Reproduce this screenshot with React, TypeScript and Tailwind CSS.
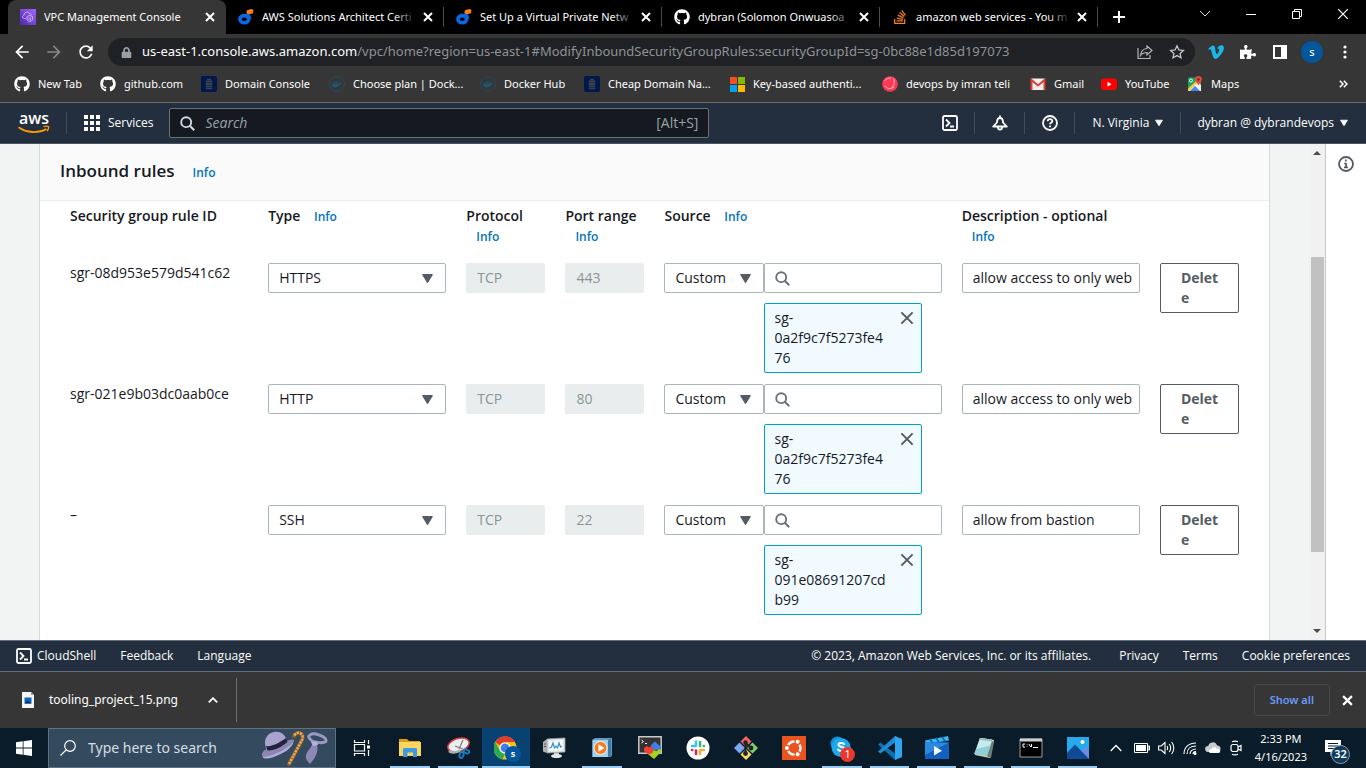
import type { ReactNode } from "react";
import { FaGithub, FaVimeoV, FaDocker, FaPuzzlePiece, FaLock, FaStackOverflow } from "react-icons/fa";
import { MdArrowBack, MdArrowForward, MdRefresh } from "react-icons/md";

/* ---------- small drawings ---------- */

const Cross = ({ s = 10, w = 2 }: { s?: number; w?: number }) => (
  <svg width={s} height={s} viewBox="0 0 10 10" stroke="currentColor" strokeWidth={w} fill="none" aria-hidden="true">
    <path d="M1 1l8 8M9 1l-8 8" />
  </svg>
);

const Caret = ({ s = 10 }: { s?: number }) => (
  <svg width={s} height={s} viewBox="0 0 10 10" fill="currentColor" stroke="currentColor" strokeWidth="1" strokeLinejoin="round" aria-hidden="true">
    <path d="M.7 1.5h8.6L5 8.5z" />
  </svg>
);

const Lens = ({ s = 16, w = 2 }: { s?: number; w?: number }) => (
  <svg width={s} height={s} viewBox="0 0 16 16" fill="none" stroke="currentColor" strokeWidth={w} aria-hidden="true">
    <circle cx="6.6" cy="6.6" r="5.3" />
    <path d="M10.4 10.4l4.8 4.8" />
  </svg>
);

const VpcIcon = () => (
  <svg width="16" height="16" viewBox="0 0 16 16" fill="none" aria-hidden="true">
    <defs>
      <linearGradient id="vpc" x1="0" y1="1" x2="1" y2="0">
        <stop stopColor="#4d27aa" />
        <stop offset="1" stopColor="#a166ff" />
      </linearGradient>
    </defs>
    <path d="M0 0h16v16H0z" fill="url(#vpc)" />
    <path d="M5.800 9.500H4.600C3.400 9.500 2.600 8.800 2.600 7.900s.7-1.600 1.500-1.700C4.100 4.300 5.400 3 7 3c1.400 0 2.300.8 2.700 2 .8-.4 2 0 2.200.9" stroke="#d9c9ff" strokeWidth=".8" />
    <path d="M9.800 6.500l2.800 1v2.600c0 1.300-1.300 2.200-2.800 2.800-1.500-.6-2.800-1.500-2.800-2.800V7.500zM9 8.500v3M10.600 8.500v3" stroke="#d9c9ff" strokeWidth=".8" />
  </svg>
);

const OceanIcon = () => (
  <svg width="16" height="16" viewBox="0 0 16 16" aria-hidden="true">
    <ellipse cx="6.300" cy="10.200" rx="4.400" ry="3.600" fill="none" stroke="#0b68e0" strokeWidth="3.600" />
    <path d="M7.500 4.600l4.500.6 1.500 5-4-2z" fill="#0b68e0" />
    <path d="M9 1.200L13 0l2.500.8L15 4.200 12.500 5H9.500L8.300 3.800z" fill="#ff7a1a" />
  </svg>
);

const DomainIcon = () => (
  <svg width="16" height="16" viewBox="0 0 16 16" aria-hidden="true">
    <rect width="16" height="16" rx="2" fill="#02174b" />
    <path d="M6 2.800h4v1.400H6zM4.700 4.600h6.600v2H4.700zM4.700 7.100h6.600v1.800H4.700zM4.700 9.400h6.600v1.800H4.700zM4.700 11.700h6.600v1.500H4.700z" fill="#39424e" />
  </svg>
);

const DockerIcon = () => (
  <span className="flex size-4 items-center justify-center rounded-full border border-[#26485c] text-[#1f5573]">
    <FaDocker className="size-2.5" />
  </span>
);

const MicrosoftIcon = () => (
  <svg width="15" height="15" viewBox="0 0 15 15" aria-hidden="true">
    <path d="M0 0h7v7H0z" fill="#f25022" />
    <path d="M8 0h7v7H8z" fill="#7fba00" />
    <path d="M0 8h7v7H0z" fill="#00a4ef" />
    <path d="M8 8h7v7H8z" fill="#ffb900" />
  </svg>
);

const RedBall = () => (
  <svg width="16" height="16" viewBox="0 0 16 16" fill="none" aria-hidden="true">
    <circle cx="8" cy="8" r="7.800" fill="#fa3a55" />
    <path d="M3 9.500c1 3 5 4.500 9 1.500M11.500 2.500c1.500 3 1 6.500-2 9.500M2.500 5C4 3 6.500 2 9 2" stroke="#ffb9c3" strokeWidth="1" />
  </svg>
);

const GmailIcon = () => (
  <svg width="16" height="16" viewBox="0 0 16 16" aria-hidden="true">
    <rect x="1" y="2.500" width="14" height="11.500" rx="1" fill="#f1f1f1" />
    <path d="M1.500 14V4L8 9.500 14.500 4v10" fill="none" stroke="#d93f35" strokeWidth="2" />
    <path d="M2 14l5-4.500M14 14L9 9.500" stroke="#cfcfcf" strokeWidth=".6" />
  </svg>
);

const YouTubeIcon = () => (
  <svg width="16" height="16" viewBox="0 0 16 16" aria-hidden="true">
    <rect y="2.500" width="16" height="11.500" rx="3" fill="#f00" />
    <path d="M6.500 5.800v5l4-2.500z" fill="#fff" />
  </svg>
);

const MapsIcon = () => (
  <svg width="16" height="16" viewBox="0 0 16 16" aria-hidden="true">
    <rect x="1" y="1.500" width="13" height="13.500" rx="1" fill="#1ea362" />
    <path d="M1 14.500L10 5l4 4v6H1z" fill="#f3f3f3" />
    <path d="M3 15l5-5 5 5z" fill="#4285f4" />
    <path d="M1 12.500L9.500 4.500l1.500 1.500L2 15l-1-.5z" fill="#fbc834" />
    <circle cx="4" cy="4.500" r="1.500" fill="none" stroke="#fff" strokeWidth=".9" />
    <path d="M11.500 0a3.400 3.400 0 013.400 3.400c0 2.400-2.600 3.300-3.400 6.100-.8-2.800-3.400-3.700-3.400-6.100A3.400 3.400 0 0111.500 0z" fill="#dd4b3e" />
    <circle cx="11.500" cy="3.400" r="1.200" fill="#7e1f17" />
  </svg>
);

const ShellIcon = () => (
  <svg width="16" height="16" viewBox="0 0 16 16" fill="none" stroke="currentColor" strokeWidth="1.800" aria-hidden="true">
    <rect x="1" y="1" width="14" height="14" rx="1.500" />
    <path d="M4 4.500L7.500 8 4 11.500M8 11.500h4" />
  </svg>
);

const BellIcon = () => (
  <svg width="16" height="16" viewBox="0 0 16 16" fill="none" stroke="currentColor" strokeWidth="1.800" strokeLinejoin="round" aria-hidden="true">
    <path d="M8 .5v2.500M5 7.500C5 4.800 6.300 3 8 3s3 1.800 3 4.500l3.800 4H1.200zM5.800 12.200c.2 1.600 1 2.500 2.200 2.500s2-.9 2.200-2.500" />
  </svg>
);

const HelpIcon = () => (
  <svg width="16" height="16" viewBox="0 0 16 16" fill="none" stroke="currentColor" strokeWidth="1.800" aria-hidden="true">
    <circle cx="8" cy="8" r="7" />
    <path d="M5.700 6.300C5.700 5 6.700 4.200 8 4.200s2.300.8 2.300 2c0 1.500-2.300 1.600-2.300 3.100M8 10.500v1.700" />
  </svg>
);

const GridIcon = () => (
  <svg width="16" height="16" viewBox="0 0 16 16" fill="currentColor" aria-hidden="true">
    {[0, 6, 12].map((y) => [0, 6, 12].map((x) => <rect key={`${x}-${y}`} x={x} y={y} width="4" height="4" />))}
  </svg>
);

const InfoIcon = () => (
  <svg width="16" height="16" viewBox="0 0 16 16" fill="none" stroke="currentColor" strokeWidth="1.800" aria-hidden="true">
    <circle cx="8" cy="8" r="7" />
    <path d="M7.800 3.600v1.800M6.200 7.500H8v4M6 11.300h4" strokeWidth="1.700" />
  </svg>
);

const AccessoriesIcon = () => (
  <svg width="70" height="38" viewBox="0 0 70 38" fill="none" aria-hidden="true">
    <path d="M1 27c-.5-3 2-6 5-7l20-8c4-2 8-2 7 0-1 4-8 9-14 12-7 3-15 7-18 3z" fill="#8c86b4" />
    <path d="M5 19C2 11 6 4 13 3c6-1 11 2 13 9-5 4-13 9-20 9z" fill="#a9a3d0" />
    <path d="M5 17c7 1 14-4 20-8l1.500 4c-6 5-13 9-20 8.500z" fill="#25223f" />
    <path d="M1.500 28c6 0 22-5 31-15-2 6-8 10-15 13-6 3-14 5-16 2z" fill="#b3aedb" />
    <path d="M28 35L41 11c3-7-5-10-8-4" stroke="#8a5a26" strokeWidth="4" strokeLinecap="round" />
    <path d="M28 35L41 11c3-7-5-10-8-4" stroke="#e2a761" strokeWidth="2.600" strokeDasharray="2.500 .8" />
    <path d="M49 6c3-3 15 1 16 5s-12 3-15 0-3-4-1-5z" stroke="#9d98c2" strokeWidth="3" />
    <path d="M52 14l4 2c2 8-3 14-7 19-3-3-5-6-4-9 1-4 5-7 7-12z" fill="#8d88b6" />
    <path d="M50 13l6-1 1 4-5 1z" fill="#b4afd8" />
  </svg>
);

const Task = ({ children }: { children: ReactNode }) => (
  <svg width="24" height="24" viewBox="0 0 24 24" fill="none" aria-hidden="true">
    {children}
  </svg>
);

const TaskViewIcon = () => (
  <Task>
    <path d="M4.500 4v2.500h10V4M4.500 20v-2.500h10V20M4.500 8.500h10v6.500h-10zM18.500 4v4M18.500 14v6" stroke="#fff" strokeWidth="1.200" />
    <path d="M17 9.500h3v3h-3z" fill="#fff" />
  </Task>
);
const ExplorerIcon = () => (
  <Task>
    <path d="M1 3h8l2 2h11v14H1z" fill="#dd9d12" />
    <path d="M1 6h22v14H1z" fill="#fcd462" />
    <path d="M5 21v-7.500c0-1 .5-1.500 1.500-1.500h11c1 0 1.500.5 1.500 1.500V21h-4v-4.500H9.500V21z" fill="#3a9be0" />
  </Task>
);
const SnipIcon = () => (
  <Task>
    <ellipse cx="12.500" cy="9" rx="11" ry="6.500" transform="rotate(-18 12.500 9)" fill="#eceff1" stroke="#d33c3c" strokeWidth="1.500" />
    <path d="M3 15c2 2 7 2 11-.5" stroke="#a9b1b5" strokeWidth="2.500" />
    <path d="M17 4l-4 9M9 10l8 3" stroke="#777" strokeWidth="1.200" />
    <ellipse cx="15.500" cy="19" rx="2" ry="3" transform="rotate(20 15.500 19)" stroke="#1b7fc4" strokeWidth="1.800" />
    <ellipse cx="20.500" cy="15.500" rx="2.800" ry="1.800" transform="rotate(20 20.500 15.500)" stroke="#1b7fc4" strokeWidth="1.800" />
  </Task>
);
const ChromeIcon = () => (
  <Task>
    <circle cx="11" cy="12" r="11.500" fill="#fbc116" />
    <path d="M1.200 6A11.500 11.500 0 0121 6H11a5.800 5.800 0 00-5 3.500z" fill="#e33b2e" />
    <path d="M1.200 6L6 14.600a5.800 5.800 0 005 3l-2.200 5.700A11.500 11.500 0 011.200 6z" fill="#2da94f" />
    <circle cx="11" cy="12" r="5.600" fill="#fff" />
    <circle cx="11" cy="12" r="4.400" fill="#3f7ee8" />
  </Task>
);
const MonitorIcon = () => (
  <Task>
    <path d="M1 6l4-3v14l-4-1.500z" fill="#aeb2b3" />
    <path d="M2 8h2M2 10.500h2" stroke="#555" />
    <path d="M5 3l18-1v14L5 17z" fill="#dfe3e4" stroke="#9aa0a2" strokeWidth=".8" />
    <path d="M7 5l14-1v10L7 15z" fill="#f5fafc" />
    <path d="M7.500 12l2-1 1.500-4 1.500 5 1.500-2 1.500 2 1.500-5 1.500 4 1.500-1" stroke="#3a8fc8" strokeWidth="1.200" />
    <path d="M12 16.500h5V20h-5z" fill="#c3c7c8" />
    <ellipse cx="14.500" cy="20" rx="5.500" ry="2" fill="#e4e6e6" />
  </Task>
);
const MediaIcon = () => (
  <Task>
    <path d="M2 4l3-2h17v18l-2 1H2z" fill="#5f9cc2" />
    <path d="M3 4h15v17H3z" fill="#9fd0ec" />
    <path d="M18 4l3-2v18l-3 1z" fill="#3c7ba6" />
    <circle cx="10.500" cy="12" r="6.500" fill="#f57c1f" stroke="#fff" strokeWidth=".8" />
    <path d="M8.500 8.300v7.400l6-3.700z" fill="#fff" />
  </Task>
);
const XtermIcon = () => (
  <Task>
    <path d="M.8.800h22.400v16.400H.8z" fill="#333" stroke="#c9c9c9" strokeWidth="1.500" />
    <path d="M3.500 4l2 1.500-2 1.500M7 7.500h2" stroke="#fff" strokeWidth="1" />
    <path d="M6 12l3-2 2 1.500L13 10l3 3-1 4-4 2-5-4z" fill="#ef4136" />
    <path d="M13 9l4-3.500 6.500 6-3.500 3-2-1-1 1-3-3z" fill="#3f80e8" />
    <path d="M10.500 18.500l4-1.500 1-3 3 1 3-2 2.500 2-8 8z" fill="#a4d41c" />
  </Task>
);
const SlackIcon = () => (
  <Task>
    <circle cx="12" cy="12" r="11.500" fill="#fff" />
    <path d="M10 5.500v4M6 10h3.500" stroke="#36c5f0" strokeWidth="2.400" strokeLinecap="round" />
    <path d="M14 6v4M18 10h-.2" stroke="#2eb67d" strokeWidth="2.600" strokeLinecap="round" />
    <path d="M14 14.500v3.500M14.500 14H18" stroke="#ecb22e" strokeWidth="2.400" strokeLinecap="round" />
    <path d="M10 14.500V18M6 14h.2" stroke="#e01e5a" strokeWidth="2.600" strokeLinecap="round" />
  </Task>
);
const GitIcon = () => (
  <Task>
    <path d="M12 0L17.500 5.500 12 11 6.500 5.500z" fill="#f0646a" />
    <path d="M5.500 6.500L11 12l-5.500 5.500L0 12z" fill="#7ba7f5" />
    <path d="M18.500 6.500L24 12l-5.500 5.500L13 12z" fill="#7ccf6b" />
    <path d="M12 13l5.500 5.500L12 24l-5.500-5.500z" fill="#fadc6c" />
    <path d="M11.500 6v12M11.500 7l5.500 5" stroke="#222" strokeWidth="2" />
    <circle cx="11.500" cy="6.500" r="2.200" fill="#222" />
    <circle cx="17" cy="12" r="2.400" fill="#222" />
    <circle cx="11.500" cy="17.500" r="2.400" fill="#222" />
  </Task>
);
const UbuntuIcon = () => (
  <Task>
    <path d="M0 0h24v24H0z" fill="#e95420" />
    <circle cx="12" cy="12" r="6.500" stroke="#fff" strokeWidth="2.400" />
    <g fill="#fff" stroke="#e95420" strokeWidth="1.300">
      <circle cx="4.900" cy="12" r="2.700" />
      <circle cx="15.600" cy="5.700" r="2.700" />
      <circle cx="15.600" cy="18.300" r="2.700" />
    </g>
  </Task>
);
const SkypeIcon = () => (
  <Task>
    <circle cx="7.500" cy="7.500" r="7" fill="#1590d8" />
    <circle cx="15" cy="15" r="7" fill="#0a78c8" />
    <circle cx="11" cy="11.500" r="9.500" fill="#1fa8ea" />
    <path d="M14 8c-.8-1.300-5.500-1.700-5.500.8 0 2.600 5.700 1.400 5.700 4.200 0 2.600-5 2.600-6.200.5" stroke="#fff" strokeWidth="2" strokeLinecap="round" />
  </Task>
);
const CodeIcon = () => (
  <Task>
    <path d="M17 24v-6.500L2.500 6.500 0 8.500z" fill="#0f6fb3" />
    <path d="M17 0v6.500L2.500 17.500 0 15.500z" fill="#1f8ad2" />
    <path d="M17 0l7 3v18l-7 3z" fill="#2fa6f0" />
  </Task>
);
const MoviesIcon = () => (
  <Task>
    <path d="M0 4.500L23 0l1 4.500L1 8z" fill="#39b8ef" />
    <path d="M5 3.500l3 4M11 2l3 4M17 1l3 4" stroke="#0f6cc0" strokeWidth="2" />
    <path d="M0 6.500h24V23H0z" fill="#1260c0" />
    <path d="M0 6.500h24L0 19z" fill="#2a8ae0" />
    <path d="M9 10v9.500l8-4.700z" fill="#fff" />
  </Task>
);
const NotepadIcon = () => (
  <Task>
    <path d="M8 2l14 2-4 18-15-3z" fill="#e8d9b0" />
    <path d="M8 2l12 1.500-5 17L2 18z" fill="#8fd0d6" />
    <path d="M8 2l12 1.500-2 6L4.500 13z" fill="#c7eaec" />
    <path d="M7.500 3l12.500 1.500" stroke="#55777c" strokeWidth="1.400" strokeDasharray="1 1" />
    <path d="M20 5l2 1-3 16-4-1.500z" fill="#6d7c7e" />
  </Task>
);
const CmdIcon = () => (
  <Task>
    <path d="M1 3h22v18H1z" fill="#000" stroke="#9b9b9b" />
    <path d="M1 2.500h22v3H1z" fill="#cfcfcf" />
    <path d="M6 8H4v3h2M8 8.500v.6M8 10.500v.6M9.800 8l2 3M12.500 8v3M14 11.500h5" stroke="#fff" strokeWidth="1" />
  </Task>
);
const PhotosIcon = () => (
  <Task>
    <path d="M1 1h22v22H1z" fill="#27a9ee" />
    <path d="M13 17l6-6 4 4v8h-8z" fill="#6f8ae6" />
    <path d="M1 17L9 8.500 23 23H1z" fill="#0f4a94" />
    <circle cx="16.500" cy="6" r="2" fill="#fff" />
  </Task>
);

/* ---------- browser chrome ---------- */

const tabs: { title: string; icon: ReactNode; active?: boolean }[] = [
  { title: "VPC Management Console", icon: <VpcIcon />, active: true },
  { title: "AWS Solutions Architect Certi", icon: <OceanIcon /> },
  { title: "Set Up a Virtual Private Netw", icon: <OceanIcon /> },
  { title: "dybran (Solomon Onwuasoa", icon: <FaGithub className="size-4" /> },
  { title: "amazon web services - You m", icon: <FaStackOverflow className="size-4 text-[#f48024]" /> },
];

function TabStrip() {
  return (
    <div className="flex h-[34px] shrink-0 bg-black pl-2">
      {tabs.map((t) => (
        <div
          key={t.title}
          className={`flex min-w-0 max-w-[218px] flex-1 items-center rounded-t-lg pl-3 ${t.active ? "bg-[#363636]" : ""}`}
        >
          <span className="shrink-0">{t.icon}</span>
          <span className="relative ml-2 flex-1 overflow-hidden whitespace-nowrap">
            {t.title}
            {!t.active && <span className="absolute inset-y-0 right-0 w-6 bg-linear-to-r from-transparent to-black" />}
          </span>
          <button aria-label={`Close ${t.title}`} className="ml-1.5 shrink-0">
            <Cross />
          </button>
          <span className={`ml-2.5 h-5 w-px ${t.active ? "" : "bg-[#4b4b4b]"}`} />
        </div>
      ))}
      <button aria-label="New tab" className="ml-[15px]">
        <svg width="12" height="12" viewBox="0 0 12 12" stroke="#fff" strokeWidth="2">
          <path d="M6 0v12M0 6h12" />
        </svg>
      </button>
      <div className="ml-auto flex pb-1.5">
        <button aria-label="Search tabs" className="flex w-[46px] items-center justify-center">
          <svg width="12" height="8" viewBox="0 0 12 8" fill="none" stroke="#ddd">
            <path d="M1 1l5 5 5-5" />
          </svg>
        </button>
        <button aria-label="Minimize" className="flex w-[46px] items-center justify-center">
          <svg width="10" height="10" viewBox="0 0 10 10" stroke="#fff">
            <path d="M0 5.500h10" />
          </svg>
        </button>
        <button aria-label="Restore" className="flex w-[46px] items-center justify-center">
          <svg width="10" height="10" viewBox="0 0 10 10" stroke="#fff" fill="none">
            <path d="M.5 2.500h7v7h-7zM2.500 2.500v-2h7v7h-2" />
          </svg>
        </button>
        <button aria-label="Close window" className="flex w-[46px] items-center justify-center">
          <Cross s={12} w={1} />
        </button>
      </div>
    </div>
  );
}

function Toolbar() {
  return (
    <div className="flex h-9 shrink-0 items-center bg-[#363636] pr-[19px] pl-3">
      <button aria-label="Back" className="text-xl"><MdArrowBack /></button>
      <button aria-label="Forward" className="ml-3 text-xl text-[#868686]"><MdArrowForward /></button>
      <button aria-label="Reload" className="ml-3 text-xl"><MdRefresh /></button>
      <div className="ml-3 flex h-7 min-w-0 flex-1 items-center rounded-full bg-[#202124] pr-2.5 pl-[13px] text-[13px]">
        <FaLock className="size-[11px] shrink-0 text-[#9aa0a6]" />
        <span className="ml-2.5 min-w-0 flex-1 truncate text-[#8f9398]">
          <span className="text-white">us-east-1.console.aws.amazon.com</span>
          /vpc/home?region=us-east-1#ModifyInboundSecurityGroupRules:securityGroupId=sg-0bc88e1d85d197073
        </span>
        <button aria-label="Share">
          <svg width="16" height="16" viewBox="0 0 16 16" fill="none" stroke="#b5b5b5" strokeWidth="1.200">
            <path d="M1 4v10.500h12V11M10 2l5 4.500-5 4.500V8.500c-3 0-5 .8-6.500 3C3.800 8 6 4.800 10 4.500z" />
          </svg>
        </button>
        <button aria-label="Bookmark this tab" className="ml-4">
          <svg width="16" height="16" viewBox="0 0 16 16" fill="none" stroke="#c4c4c4" strokeWidth="1.300">
            <path d="M8 1.800l1.900 4.100 4.500.5-3.300 3 .9 4.400L8 11.600l-4 2.200.9-4.400-3.300-3 4.500-.5z" />
          </svg>
        </button>
      </div>
      <button aria-label="Vimeo" className="ml-3 text-lg text-[#1ab7ea]"><FaVimeoV /></button>
      <button aria-label="Extensions" className="ml-[15px]"><FaPuzzlePiece className="size-4" /></button>
      <button aria-label="Side panel" className="ml-[17px]">
        <svg width="14" height="14" viewBox="0 0 14 14" fill="#fff">
          <path d="M0 0h14v14H0zM2 2v10h6V2z" fillRule="evenodd" />
        </svg>
      </button>
      <button aria-label="Profile" className="ml-3.5 flex size-[22px] items-center justify-center rounded-full bg-[#02569b] text-[11px] font-medium">
        s
      </button>
      <button aria-label="Menu" className="ml-5">
        <svg width="4" height="14" viewBox="0 0 4 14" fill="#fff">
          <circle cx="2" cy="2" r="1.600" /><circle cx="2" cy="7" r="1.600" /><circle cx="2" cy="12" r="1.600" />
        </svg>
      </button>
    </div>
  );
}

const bookmarks: { label: string; icon: ReactNode; width: string }[] = [
  { label: "New Tab", icon: <FaGithub className="size-4" />, width: "w-[86px]" },
  { label: "github.com", icon: <FaGithub className="size-4" />, width: "w-[101px]" },
  { label: "Domain Console", icon: <DomainIcon />, width: "w-[128px]" },
  { label: "Choose plan | Dock...", icon: <DockerIcon />, width: "w-[151px]" },
  { label: "Docker Hub", icon: <DockerIcon />, width: "w-[104px]" },
  { label: "Cheap Domain Na...", icon: <DomainIcon />, width: "w-[146px]" },
  { label: "Key-based authenti...", icon: <MicrosoftIcon />, width: "w-[152px]" },
  { label: "devops by imran teli", icon: <RedBall />, width: "w-[148px]" },
  { label: "Gmail", icon: <GmailIcon />, width: "w-[71px]" },
  { label: "YouTube", icon: <YouTubeIcon />, width: "w-[86px]" },
  { label: "Maps", icon: <MapsIcon />, width: "w-[54px]" },
];

function Bookmarks() {
  return (
    <nav className="flex h-8 shrink-0 items-center bg-[#363636] pr-[18px] pb-1 pl-3.5">
      {bookmarks.map((b) => (
        <a key={b.label} href="#" className={`flex shrink-0 items-center gap-2 whitespace-nowrap ${b.width}`}>
          <span className="shrink-0">{b.icon}</span>
          {b.label}
        </a>
      ))}
      <button aria-label="More bookmarks" className="ml-auto">
        <svg width="9" height="8" viewBox="0 0 9 8" fill="none" stroke="#fff" strokeWidth="1.500">
          <path d="M.8.800L4 4 .8 7.200M4.800.800L8 4 4.800 7.200" />
        </svg>
      </button>
    </nav>
  );
}

/* ---------- AWS console ---------- */

function ConsoleHeader() {
  return (
    <header className="flex h-[42px] shrink-0 items-center border-t border-[#6b6b6b] border-b border-b-[#4a5460] bg-[#232f3e] pr-[18px] pl-[18px] text-[12px] font-medium text-white">
      <a href="#" aria-label="AWS home" className="flex w-8 flex-col items-center">
        <svg width="32" height="21" viewBox="0 0 32 21" fill="none">
          <text x="16" y="11" textAnchor="middle" fontFamily="Open Sans, sans-serif" fontSize="16" fontWeight="600" fill="#fff">aws</text>
          <path d="M.5 14.300c8 5.800 20 6.200 28 1.700" stroke="#f90" strokeWidth="1.800" />
          <path d="M25.500 13.600c2-.6 4-.6 4.800 0s-.2 3-1.300 4.600" stroke="#f90" strokeWidth="1.400" />
        </svg>
      </a>
      <span className="ml-4 h-[22px] w-px bg-[#414d5c]" />
      <button className="ml-[17px] flex items-center gap-2">
        <GridIcon />
        Services
      </button>
      <label className="ml-4 flex h-[30px] w-[540px] items-center rounded-xs border border-[#687078] bg-[#16191f] px-2.5 text-sm font-normal text-[#95a5a6]">
        <span className="text-[#d5dbdb]"><Lens s={15} /></span>
        <input type="search" aria-label="Search" placeholder="Search" className="ml-2.5 min-w-0 flex-1 bg-transparent italic outline-none placeholder:text-[#95a5a6]" />
        [Alt+S]
      </label>
      <div className="ml-auto flex items-center">
        <button aria-label="CloudShell" className="pr-4"><ShellIcon /></button>
        <span className="h-[22px] w-px bg-[#414d5c]" />
        <button aria-label="Notifications" className="pr-4 pl-[17px]"><BellIcon /></button>
        <span className="h-[22px] w-px bg-[#414d5c]" />
        <button aria-label="Help" className="pr-4 pl-[17px]"><HelpIcon /></button>
        <span className="h-[22px] w-px bg-[#414d5c]" />
        <button className="flex items-center gap-1.5 pr-[17px] pl-[17px]">N. Virginia <Caret s={8} /></button>
        <span className="h-[22px] w-px bg-[#414d5c]" />
        <button className="flex items-center gap-1.5 pl-4">dybran @ dybrandevops <Caret s={8} /></button>
      </div>
    </header>
  );
}

const Info = ({ className }: { className: string }) => (
  <a href="#" className={`inline-block text-[12px] font-semibold text-[#0073bb] ${className}`}>Info</a>
);

const columns = [
  { label: "Security group rule ID", width: "w-2/12", info: false },
  { label: "Type", width: "w-2/12", info: true },
  { label: "Protocol", width: "w-1/12", info: true },
  { label: "Port range", width: "w-1/12", info: true },
  { label: "Source", width: "w-3/12", info: true },
  { label: "Description - optional", width: "w-2/12", info: true },
];

const rules = [
  { id: "sgr-08d953e579d541c62", type: "HTTPS", protocol: "TCP", port: "443", token: "sg-0a2f9c7f5273fe476", description: "allow access to only web" },
  { id: "sgr-021e9b03dc0aab0ce", type: "HTTP", protocol: "TCP", port: "80", token: "sg-0a2f9c7f5273fe476", description: "allow access to only web" },
  { id: "–", type: "SSH", protocol: "TCP", port: "22", token: "sg-091e08691207cdb99", description: "allow from bastion" },
];

function Dropdown({ label, value, options }: { label: string; value: string; options: string[] }) {
  return (
    <div className="relative">
      <select
        aria-label={label}
        defaultValue={value}
        className="block h-[30px] w-full appearance-none rounded-xs border border-[#aab7b8] bg-white px-2.5 text-[#16191f]"
      >
        {options.map((o) => <option key={o}>{o}</option>)}
      </select>
      <span className="pointer-events-none absolute inset-y-0 right-[13px] flex items-center text-[#545b64]"><Caret s={11} /></span>
    </div>
  );
}

function RuleRow({ rule }: { rule: (typeof rules)[number] }) {
  const disabled = "block h-[30px] w-full rounded-xs bg-[#eaeded] px-[11px] pb-0.5 text-[#879596]";
  return (
    <tr className="align-top">
      <td className="px-2.5 pt-2.5 pb-px">{rule.id}</td>
      <td className="px-2.5 pt-2.5">
        <Dropdown label="Type" value={rule.type} options={["HTTPS", "HTTP", "SSH"]} />
      </td>
      <td className="px-2.5 pt-2.5">
        <input aria-label="Protocol" disabled defaultValue={rule.protocol} className={disabled} />
      </td>
      <td className="px-2.5 pt-2.5">
        <input aria-label="Port range" disabled defaultValue={rule.port} className={disabled} />
      </td>
      <td className="px-2.5 pt-2.5 pb-px">
        <div className="flex">
          <div className="w-[100px] shrink-0">
            <Dropdown label="Source type" value="Custom" options={["Custom", "Anywhere-IPv4", "My IP"]} />
          </div>
          <div className="min-w-0 flex-1">
            <label className="flex h-[30px] items-center rounded-xs border border-[#aab7b8] px-2.5 text-[#687078]">
              <Lens s={15} />
              <input aria-label="Source" className="ml-2 min-w-0 flex-1 outline-none" />
            </label>
            <div className="mt-2.5 mr-5 flex items-start rounded-xs border border-[#00a1c9] bg-[#f1faff] py-1 pr-[7px] pl-[9px]">
              <span className="w-28 break-words">{rule.token}</span>
              <button aria-label={`Remove ${rule.token}`} className="mt-[3px] ml-auto text-[#545b64]"><Cross s={14} w={1.4} /></button>
            </div>
          </div>
        </div>
      </td>
      <td className="px-2.5 pt-2.5">
        <input aria-label="Description" defaultValue={rule.description} className="block h-[30px] w-full rounded-xs border border-[#aab7b8] pr-1 pb-0.5 pl-2.5 text-[#16191f]" />
      </td>
      <td className="px-2.5 pt-2.5">
        <button className="w-full rounded-xs border border-[#545b64] py-1 pr-4 pl-5 text-left font-bold break-all text-[#545b64]">Delete</button>
      </td>
    </tr>
  );
}

function RulesPanel() {
  return (
    <section className="min-h-full border-x border-[#d5dbdb] bg-white">
      <div className="flex h-[57px] items-center border-b border-[#eaeded] bg-[#fafafa] px-5 pb-0.5">
        <h2 className="text-[17px] font-semibold text-[#16191f]">Inbound rules</h2>
        <Info className="mt-1 ml-[18px]" />
      </div>
      <div className="px-5">
        <table className="w-full table-fixed text-left">
          <thead>
            <tr className="align-top">
              {columns.map((c) => (
                <th key={c.label} className={`px-2.5 pt-[5px] pb-[7px] font-semibold text-[#16191f] ${c.width}`}>
                  {c.label} {c.info && <Info className="pl-2.5" />}
                </th>
              ))}
              <th className="w-1/12"><span className="sr-only">Actions</span></th>
            </tr>
          </thead>
          <tbody>
            {rules.map((r) => <RuleRow key={r.id} rule={r} />)}
          </tbody>
        </table>
      </div>
    </section>
  );
}

function ScrollTrack() {
  return (
    <div className="flex w-4 shrink-0 flex-col items-center bg-[#f1f1f1] py-1.5 text-[#4a4a4a]">
      <svg width="8" height="6" viewBox="0 0 8 6" fill="currentColor"><path d="M4 1l4 4H0z" /></svg>
      <div className="min-h-0 flex-[101]" />
      <div className="min-h-0 w-[13px] flex-[295] bg-[#c1c1c1]" />
      <div className="min-h-0 flex-[76]" />
      <svg width="8" height="6" viewBox="0 0 8 6" fill="currentColor"><path d="M4 5l4-4H0z" /></svg>
    </div>
  );
}

function ConsoleFooter() {
  return (
    <footer className="flex h-8 shrink-0 items-center border-y border-[#5f6b7a] bg-[#232f3e] px-4 text-[12px] font-medium text-white">
      <button className="flex items-center gap-[5px]"><ShellIcon />CloudShell</button>
      <button className="ml-6">Feedback</button>
      <button className="ml-6">Language</button>
      <span className="ml-auto">© 2023, Amazon Web Services, Inc. or its affiliates.</span>
      <a href="#" className="ml-7">Privacy</a>
      <a href="#" className="ml-6">Terms</a>
      <a href="#" className="ml-6">Cookie preferences</a>
    </footer>
  );
}

/* ---------- download shelf and taskbar ---------- */

function DownloadShelf() {
  return (
    <div className="flex h-14 shrink-0 items-center bg-[#363636] pr-[13px] pl-[22px] text-[12px]">
      <svg width="13" height="16" viewBox="0 0 13 16" aria-hidden="true">
        <path d="M0 0h9l3 3v13H0z" fill="#f5f5f5" />
        <path d="M9 0l3 3H9z" fill="#9a9a9a" />
        <path d="M2.500 5.500h7v6h-7z" fill="#0a66b8" />
        <path d="M2.500 11.500l3-3 4 3z" fill="#06305c" />
      </svg>
      <span className="ml-3.5">tooling_project_15.png</span>
      <button aria-label="Download options" className="ml-[30px]">
        <svg width="10" height="6" viewBox="0 0 10 6" fill="none" stroke="#fff" strokeWidth="1.800"><path d="M.8 5.300L5 1.200l4.200 4.100" /></svg>
      </button>
      <span className="ml-[18px] h-11 w-px bg-[#6e6e6e]" />
      <button className="ml-auto h-8 rounded border border-[#45484c] px-[15px] text-[11px] font-semibold text-[#6a9bf8]">Show all</button>
      <button aria-label="Close shelf" className="ml-3"><Cross s={11} /></button>
    </div>
  );
}

const apps: { name: string; icon: ReactNode; open?: boolean; active?: boolean; narrow?: boolean; badge?: string }[] = [
  { name: "Task View", icon: <TaskViewIcon /> },
  { name: "File Explorer", icon: <ExplorerIcon />, open: true },
  { name: "Snipping Tool", icon: <SnipIcon />, open: true },
  { name: "Chrome", icon: <ChromeIcon />, open: true, active: true, badge: "chrome" },
  { name: "Resource Monitor", icon: <MonitorIcon /> },
  { name: "Media Player", icon: <MediaIcon />, open: true },
  { name: "MobaXterm", icon: <XtermIcon /> },
  { name: "Slack", icon: <SlackIcon /> },
  { name: "Git Bash", icon: <GitIcon /> },
  { name: "Ubuntu", icon: <UbuntuIcon /> },
  { name: "Skype", icon: <SkypeIcon />, open: true, badge: "skype" },
  { name: "Visual Studio Code", icon: <CodeIcon />, open: true, narrow: true },
  { name: "Movies", icon: <MoviesIcon />, open: true, narrow: true },
  { name: "Notepad", icon: <NotepadIcon />, open: true, narrow: true },
  { name: "Command Prompt", icon: <CmdIcon />, open: true, narrow: true },
  { name: "Photos", icon: <PhotosIcon />, open: true, narrow: true },
];

function Taskbar() {
  return (
    <div className="flex h-10 shrink-0 items-stretch bg-[#0a1c2a] text-white">
      <button aria-label="Start" className="flex w-12 items-center justify-center">
        <svg width="16" height="16" viewBox="0 0 16 16" fill="#fff">
          <path d="M0 2.300L6.700 1.300v6.300H0zM7.500 1.200L16 0v7.600H7.500zM0 8.400h6.700v6.300L0 13.700zM7.500 8.400H16V16l-8.500-1.200z" />
        </svg>
      </button>
      <label className="flex w-72 items-center border border-[#5d7385] bg-[#344b5f] pr-1 pl-[11px] text-sm">
        <svg width="16" height="16" viewBox="0 0 16 16" fill="none" stroke="#fff" strokeWidth="1.200" aria-hidden="true">
          <circle cx="10" cy="6" r="5.300" /><path d="M6.200 9.800L.5 15.500" />
        </svg>
        <input aria-label="Search Windows" placeholder="Type here to search" className="ml-3 min-w-0 flex-1 bg-transparent outline-none placeholder:text-[#d5dde3]" />
        <AccessoriesIcon />
      </label>
      <div className="flex pl-0.5">
        {apps.map((a) => (
          <button
            key={a.name}
            aria-label={a.name}
            className={`relative flex items-center justify-center ${a.narrow ? "w-[47px]" : "w-12"} ${a.active ? "bg-[#074272]" : ""}`}
          >
            {a.icon}
            {a.badge === "chrome" && (
              <span className="absolute top-[18px] left-[23px] flex size-4 items-center justify-center rounded-full bg-[#02569b] text-[9px] font-bold">s</span>
            )}
            {a.badge === "skype" && (
              <span className="absolute top-[19px] left-[22px] flex size-[15px] items-center justify-center rounded-full bg-[#e8382f] text-[10px]">1</span>
            )}
            {a.open && <span className={`absolute bottom-0 h-0.5 bg-[#9accf2] ${a.active ? "inset-x-0" : "inset-x-1"}`} />}
          </button>
        ))}
      </div>
      <div className="ml-auto flex items-center gap-2">
        <svg width="12" height="8" viewBox="0 0 12 8" fill="none" stroke="#fff" strokeWidth="1.300"><path d="M.7 7L6 1.500 11.300 7" /></svg>
        <svg className="ml-1" width="16" height="10" viewBox="0 0 16 10" fill="none"><path d="M.5.500h13v9H.5zM14 3h1.500v4H14z" stroke="#fff" /><path d="M2 2h10v6H2z" fill="#fff" /></svg>
        <svg width="17" height="14" viewBox="0 0 17 14" fill="none" stroke="#fff" strokeWidth="1.100"><path d="M.6 5h2.600L7 1.500v11L3.200 9H.6zM9 5c.8 1.200.8 2.800 0 4M11.300 3c1.700 2.400 1.700 5.600 0 8M13.700 1c2.500 3.600 2.500 8.400 0 12" /></svg>
        <svg width="14" height="14" viewBox="0 0 14 14" fill="none" stroke="#fff" strokeWidth="1.100"><path d="M1 13C1 6 6 2 13 2M4 13c0-5 3.500-8 9-8M7 13c0-3 2.500-5 6-5M10 13c0-1.500 1-2.500 3-2.500" /><circle cx="12" cy="12.500" r="1" fill="#fff" /></svg>
        <svg width="16" height="12" viewBox="0 0 16 12"><path d="M3 10a3 3 0 01.3-6A4.500 4.500 0 0112 3.500a3.300 3.300 0 011 6.500z" fill="#c9cdd0" /><path d="M5 11c-2-1-1-4 1.500-4 1-2 4-2.500 5-.5 4-.5 5 4.500 1.500 4.500z" fill="#fff" /></svg>
        <svg width="14" height="16" viewBox="0 0 14 16" fill="none" stroke="#fff" strokeWidth="1.200"><rect x="2" y="4.500" width="7" height="7" rx="2" /><path d="M9 7l3-1.500v5L9 9M3 1.800c2-1 4-1 6 0M3 14.200c2 1 4 1 6 0" /></svg>
        <div className="ml-1 text-center text-[11px] leading-[18px]">
          <div>2:33 PM</div>
          <div>4/16/2023</div>
        </div>
        <button aria-label="32 notifications" className="relative ml-2.5 flex h-full w-[41px] items-center">
          <svg width="16" height="16" viewBox="0 0 16 16"><path d="M0 0h16v12h-7l-3.500 4v-4H0z" fill="#fff" /><path d="M3 3.500h10M3 6h10M3 8.500h10" stroke="#0a1c2a" /></svg>
          <span className="absolute top-[17px] left-1.5 flex size-[19px] items-center justify-center rounded-full border border-[#8a9aa6] bg-[#0d3a5e] text-[11px] font-semibold">32</span>
        </button>
      </div>
    </div>
  );
}

export default function App() {
  return (
    <div className="flex h-screen flex-col overflow-hidden bg-white font-['Noto_Sans','Open_Sans',sans-serif] text-[11px] text-white">
      <TabStrip />
      <Toolbar />
      <Bookmarks />
      <div className="flex min-h-0 flex-1 flex-col font-['Open_Sans','Noto_Sans',sans-serif]">
        <ConsoleHeader />
        <div className="flex min-h-0 flex-1 text-sm text-[#16191f]">
          <main className="min-w-0 flex-1 overflow-hidden bg-[#f2f3f3] px-[39px]">
            <RulesPanel />
          </main>
          <ScrollTrack />
          <aside className="w-[41px] shrink-0 border-l border-[#c3c7c7] px-3 pt-3">
            <button aria-label="Open info panel" className="text-[#545b64]"><InfoIcon /></button>
          </aside>
        </div>
        <ConsoleFooter />
      </div>
      <DownloadShelf />
      <Taskbar />
    </div>
  );
}
